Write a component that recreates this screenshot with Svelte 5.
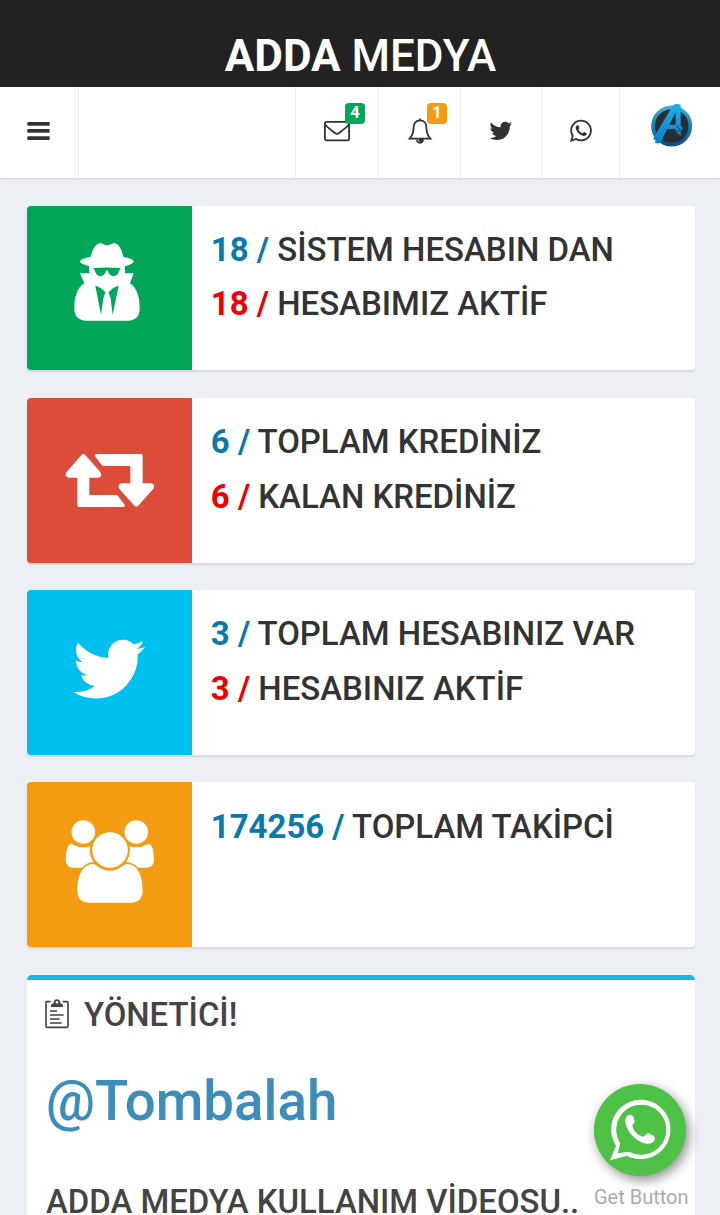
<script>
  const birdPath =
    'M1684 408q-67 98-162 167 1 14 1 42 0 130-38 259.5t-115.5 248.5-184.5 210.5-258 146-323 54.5q-271 0-496-145 35 4 78 4 225 0 401-138-105-2-188-64.5t-114-159.5q33 5 61 5 43 0 85-11-112-23-185.5-111.5t-73.5-205.5v-4q68 38 146 41-66-44-105-115t-39-154q0-88 44-163 121 149 294.5 238.5t371.5 99.5q-8-38-8-74 0-134 94.5-228.5t228.5-94.5q140 0 236 102 109-21 205-78-37 115-142 178 93-10 186-50z';
  const whatsappPath =
    'M1113 974q13 0 97.5 44t89.5 53q2 5 2 15 0 33-17 76-16 39-71 65.5t-102 26.5q-57 0-190-62-98-45-170-118t-148-185q-72-107-71-194v-8q3-91 74-158 24-22 52-22 6 0 18 1.5t19 1.5q19 0 26.5 6.5t15.5 27.5q8 20 33 88t25 75q0 21-34.5 57.5t-34.5 46.5q0 7 5 15 34 73 102 137 56 53 151 101 12 7 22 7 15 0 54-48.5t52-48.5zm-203 530q127 0 243.5-50t200.5-134 134-200.5 50-243.5-50-243.5-134-200.5-200.5-134-243.5-50-243.5 50-200.5 134-134 200.5-50 243.5q0 203 120 368l-79 233 242-77q158 104 345 104zm0-1382q153 0 292.5 60t240.5 161 161 240.5 60 292.5-60 292.5-161 240.5-240.5 161-292.5 60q-195 0-365-94l-417 134 136-405q-108-178-108-389 0-153 60-292.5t161-240.5 240.5-161 292.5-60z';

  const boxes = [
    {
      icon: 'secret',
      color: 'green',
      lines: [
        { count: 18, text: 'SİSTEM HESABIN DAN' },
        { count: 18, text: 'HESABIMIZ AKTİF', red: true }
      ]
    },
    {
      icon: 'retweet',
      color: 'red',
      lines: [
        { count: 6, text: 'TOPLAM KREDİNİZ' },
        { count: 6, text: 'KALAN KREDİNİZ', red: true }
      ]
    },
    {
      icon: 'twitter',
      color: 'aqua',
      lines: [
        { count: 3, text: 'TOPLAM HESABINIZ VAR' },
        { count: 3, text: 'HESABINIZ AKTİF', red: true }
      ]
    },
    {
      icon: 'users',
      color: 'yellow',
      lines: [{ count: 174256, text: 'TOPLAM TAKİPCİ' }]
    }
  ];
</script>

<div class="wrapper">
  <header>
    <div class="logo"><b>ADDA</b> MEDYA</div>
    <nav>
      <div class="nav-item toggle">
        <svg width="23" height="20" viewBox="0 0 23 20">
          <rect x="0.3" y="1" width="22.4" height="3.8" rx="0.8" />
          <rect x="0.3" y="8" width="22.4" height="3.8" rx="0.8" />
          <rect x="0.3" y="15.2" width="22.4" height="3.8" rx="0.8" />
        </svg>
      </div>
      <div class="nav-item mail">
        <svg class="line" width="26" height="26" viewBox="0 0 26 26">
          <rect x="0.9" y="3.8" width="24.2" height="18.6" rx="1.8" />
          <path d="M1 6.5C3 9.3 6 11 9 13.5C11 15.3 12 16.1 13 16.1S15 15.3 17 13.5C20 11 23 9.3 25 6.5" />
        </svg>
        <span class="label bg-green">4</span>
      </div>
      <div class="nav-item bell">
        <svg class="line" width="26" height="28" viewBox="0 0 26 28">
          <path d="M13 3.4C9 3.4 6.6 6.2 6.6 10.4C6.6 15.5 5 18.9 2.6 21.6H23.4C21 18.9 19.4 15.5 19.4 10.4C19.4 6.2 17 3.4 13 3.4Z" />
          <path d="M13 1.4V3.2M10 22.6A3 3.2 0 0 0 16 22.6" />
          <path d="M12 22.5L13.4 25.4A2.6 2.8 0 0 0 15.8 22.5Z" fill="#333" stroke-width="1" />
        </svg>
        <span class="label bg-yellow">1</span>
      </div>
      <div class="nav-item bird">
        <svg width="25.7" height="25.7" viewBox="0 0 1792 1792"><path d={birdPath} /></svg>
      </div>
      <div class="nav-item phone">
        <svg width="25.7" height="25.7" viewBox="0 0 1792 1792"><path d={whatsappPath} /></svg>
      </div>
      <div class="nav-item user">
        <svg width="44" height="44" viewBox="0 0 132 132">
          <defs>
            <linearGradient id="ring" x1="0" y1="0" x2="0" y2="1">
              <stop offset="0" stop-color="#42a9d2" />
              <stop offset="0.5" stop-color="#1585bd" />
              <stop offset="1" stop-color="#0b4e88" />
            </linearGradient>
            <linearGradient id="letter" x1="0" y1="0" x2="0" y2="1">
              <stop offset="0" stop-color="#1db3e8" />
              <stop offset="1" stop-color="#0b7fc4" />
            </linearGradient>
          </defs>
          <circle cx="65" cy="69" r="56" fill="#292e34" />
          <circle cx="65" cy="69" r="56" fill="none" stroke="url(#ring)" stroke-width="11" />
          <path
            d="M70 5Q80 1 92 5V68L99 76L92 84V99L77 86V78H51L33 118Q24 124 16 119V111L9 107Z M77 28L58 65H77Z"
            fill="url(#letter)"
            fill-rule="evenodd"
          />
          <path d="M78 68L91 79L78 89" fill="none" stroke="#20333e" stroke-width="3" />
        </svg>
      </div>
    </nav>
  </header>

  <main>
    {#each boxes as box}
      <section class="info-box">
        <div class="info-icon bg-{box.color}">
          {#if box.icon === 'secret'}
            <svg width="165" height="165" viewBox="21 16 495 495">
              <path
                d="M239 131C248 130 253 137 261 137C269 137 275 130 286 131C300 134 306 157 310 171C324 174 341 179 341 185C341 191 329 196 314 200C316 207 315 214 314 221H341L330 251C352 264 359 297 359 326C359 350 347 363 323 363H199C175 363 163 350 163 326C163 297 170 264 193 251L180 221H209C207 214 207 207 208 200C193 196 180 191 180 185C180 179 197 174 212 171C216 156 223 134 239 131Z"
              />
              <path
                class="cut"
                d="M221 205Q261 202 301 205V209L298 211C295 222 291 229 281 229C270 229 267 222 264 214C262 211 260 211 258 214C255 222 252 229 241 229C231 229 227 222 224 211L221 209Z"
              />
              <path
                class="cut"
                d="M226 258C238 261 249 268 257 279C254 283 252 289 250 297L243 345ZM296 258C284 261 273 268 265 279C269 283 270 289 272 297L278 345Z"
              />
            </svg>
          {:else if box.icon === 'retweet'}
            <svg width="165" height="165" viewBox="21 24 495 495">
              <path
                d="M185 194Q190 190 196 195L241 246Q245 252 243 257Q242 263 234 263H208V315H289Q292 315 294 318L314 344Q316 350 310 351H177Q172 351 172 345V263H146Q138 262 137 256Q136 251 140 246Z"
              />
              <path
                d="M229 192H362Q368 192 368 198V280H394Q401 281 402 287Q403 292 400 296L354 348Q349 353 344 348L298 297Q295 292 296 287Q298 280 305 280H331V228H251Q247 228 245 225L225 199Q224 193 229 192Z"
              />
            </svg>
          {:else if box.icon === 'twitter'}
            <svg class="bird-icon" width="82.2" height="82.2" viewBox="0 0 1792 1792"><path d={birdPath} /></svg>
          {:else}
            <svg width="165" height="165" viewBox="21 21 495 495">
              <circle cx="190" cy="171" r="35.5" />
              <circle cx="349" cy="171" r="35.5" />
              <path
                d="M154 206Q182 223 210 214Q206 240 221 261Q199 263 185 278H162Q137 278 137 255Q138 207 154 206Z"
              />
              <path
                d="M385 206Q357 223 329 214Q333 240 318 261Q340 263 354 278H377Q402 278 402 255Q401 207 385 206Z"
              />
              <circle cx="270" cy="225" r="53.5" />
              <path
                d="M220 267C228 267 241 287 270 287C299 287 312 267 320 267C354 267 368 304 368 347C368 370 354 383 333 383H207C186 383 172 370 172 347C172 304 186 267 220 267Z"
              />
            </svg>
          {/if}
        </div>
        <div class="info-content">
          {#each box.lines as line}
            <div class="info-line"><b class:danger={line.red}>{line.count} /</b> {line.text}</div>
          {/each}
        </div>
      </section>
    {/each}

    <section class="panel">
      <div class="panel-header">
        <svg width="24" height="30" viewBox="0 0 72 90">
          <path
            d="M17 8H4Q3 8 3 11V82Q3 85 6 85H66Q69 85 69 82V11Q69 8 66 8H53"
            fill="none"
            stroke="#444"
            stroke-width="5"
          />
          <path
            d="M18 24V19Q19 15 26 13V8Q28 1 36 1Q44 1 46 8V13Q53 15 54 19V24ZM36 6A4 4 0 1 0 36 14A4 4 0 1 0 36 6Z"
            fill-rule="evenodd"
          />
          <path d="M15 36H36M15 48H56M15 60H44M15 72H50" stroke="#444" stroke-width="5" />
        </svg>
        <h3>YÖNETİCİ!</h3>
      </div>
      <a class="handle" href="#tombalah">@Tombalah</a>
      <h4>ADDA MEDYA KULLANIM VİDEOSU..</h4>
    </section>
  </main>

  <div class="get-button">
    <div class="circle">
      <svg width="92" height="92" viewBox="0 0 276 276">
        <path
          fill-rule="evenodd"
          d="M48 229L66 185A89 89 0 1 1 99 215ZM71 208L106 203A75 75 0 1 0 79 178Z"
        />
        <path
          d="M99 96C105 90 115 91 118 98L122 112C123 118 115 121 115 126C118 140 133 155 147 158C153 159 157 147 164 148L178 155C185 159 184 168 178 173C168 182 152 180 139 173C119 162 105 147 98 128C93 116 92 104 99 96Z"
        />
      </svg>
    </div>
    <span>Get Button</span>
  </div>
</div>

<style>
  :global(body) {
    margin: 0;
    background: #ecf0f5;
  }

  .wrapper {
    position: relative;
    height: 100vh;
    overflow: hidden;
    background: #ecf0f5;
    color: #333;
    font-family: Roboto, 'Liberation Sans', sans-serif;
    font-weight: 500;
  }

  svg {
    display: block;
    flex: none;
    fill: #333;
  }

  .logo {
    box-sizing: border-box;
    height: 87px;
    padding: 24px 0 0 1px;
    background: #222;
    color: #fff;
    font-size: 44px;
    line-height: 64px;
    text-align: center;
  }

  nav {
    display: flex;
    height: 91px;
    background: #fff;
    box-shadow: 0 1px 2px rgba(0, 0, 0, 0.14);
  }

  .nav-item {
    position: relative;
    box-sizing: border-box;
    display: flex;
    justify-content: center;
    align-items: center;
    padding-bottom: 3px;
    border-left: 1px solid #eee;
  }

  .toggle {
    width: 79px;
    padding-right: 1px;
    margin-right: auto;
    border-left: 0;
    border-right: 1px solid #eee;
  }

  .mail {
    width: 83px;
  }

  .bell {
    width: 82px;
  }

  .bird {
    width: 81px;
  }

  .phone {
    width: 78px;
  }

  .user {
    width: 101px;
    padding: 0 0 15px 4px;
  }

  .line {
    fill: none;
    stroke: #333;
    stroke-width: 1.8;
  }

  .label {
    position: absolute;
    top: 16px;
    left: 49px;
    width: 20px;
    height: 21px;
    border-radius: 4px;
    color: #fff;
    font-size: 16.5px;
    font-weight: 700;
    line-height: 20px;
    text-align: center;
  }

  .bell .label {
    left: 48px;
  }

  main {
    display: flex;
    flex-direction: column;
    gap: 27.5px;
    padding: 27.6px 25px 0 27px;
  }

  .info-box {
    display: flex;
    height: 164.75px;
    flex: none;
    overflow: hidden;
    border-radius: 4px;
    background: #fff;
    box-shadow: 0 2px 2px rgba(0, 0, 0, 0.1);
  }

  .info-icon {
    display: flex;
    justify-content: center;
    align-items: center;
    width: 165px;
    flex: none;
  }

  .info-icon svg {
    fill: #fff;
  }

  .info-icon .bird-icon {
    margin-bottom: 6px;
  }

  .bg-green {
    background: #00a65a;
  }

  .bg-red {
    background: #dd4b39;
  }

  .bg-aqua {
    background: #00c0ef;
  }

  .bg-yellow {
    background: #f39c12;
  }

  .cut {
    fill: #00a65a;
  }

  .info-content {
    padding: 17.4px 0 0 18.8px;
    font-size: 32.95px;
    line-height: 54.4px;
    white-space: nowrap;
  }

  .info-line b {
    color: #0a7aaa;
  }

  .info-line .danger {
    color: #f00000;
  }

  .panel {
    height: 300px;
    padding: 0 18px 0 19px;
    border-top: 5px solid #14b9e2;
    border-radius: 5px;
    background: #fff;
    color: #444;
  }

  .panel-header {
    display: flex;
    align-items: center;
    gap: 15px;
    height: 69px;
    margin-left: -1px;
  }

  .panel-header svg {
    margin-bottom: 1px;
    fill: #444;
  }

  h3,
  h4 {
    margin: 0;
    font-size: 32.9px;
    font-weight: 500;
    line-height: 40px;
    white-space: nowrap;
  }

  h3 {
    padding-top: 2px;
  }

  .handle {
    display: block;
    margin-top: 20px;
    color: #3c8dbc;
    font-size: 54.7px;
    line-height: 64px;
    text-decoration: none;
  }

  h4 {
    margin-top: 49px;
  }

  .get-button {
    position: absolute;
    left: 594px;
    top: 1084px;
    width: 95px;
    color: #aaa;
    font-size: 20px;
    font-weight: 400;
    line-height: 24px;
    white-space: nowrap;
  }

  .circle {
    width: 92px;
    height: 92px;
    margin-bottom: 9px;
    border-radius: 50%;
    background: #4dc247;
    box-shadow: 3px 4px 12px rgba(0, 0, 0, 0.45);
  }

  .circle svg {
    fill: #fff;
  }
</style>
